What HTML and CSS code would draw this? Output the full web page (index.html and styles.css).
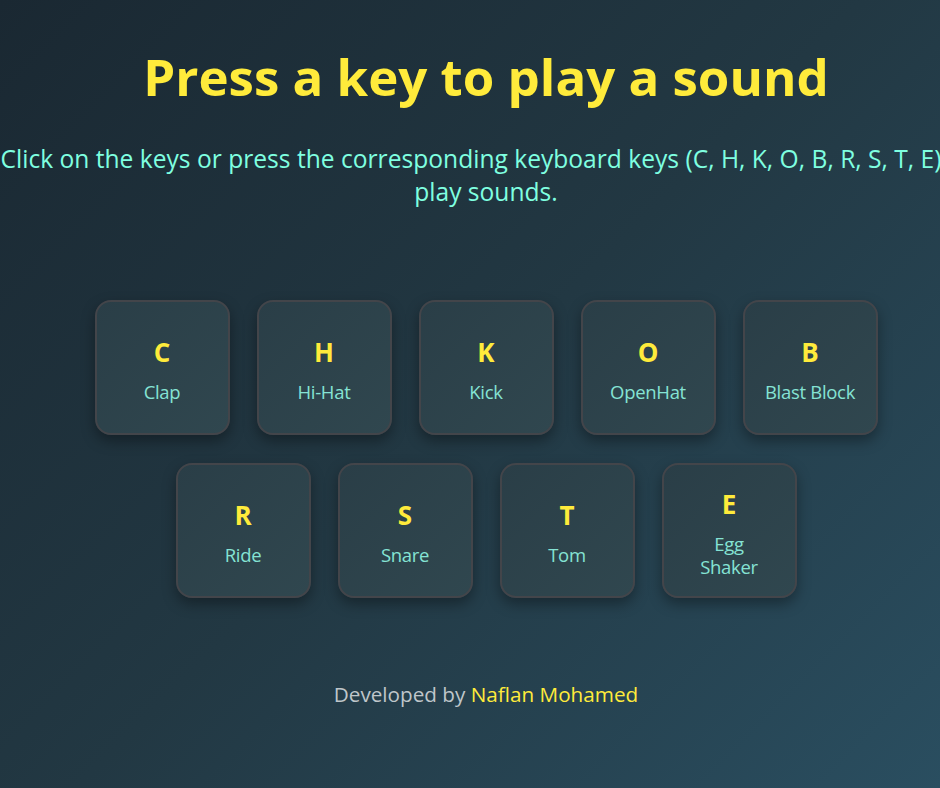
FILE: index.html
```html
<!DOCTYPE html>
<html lang="en">
<head>
<meta charset="utf-8">
<title>Drum Kit</title>
<link rel="stylesheet" href="styles.css">
</head>
<body>
<div class="page">
  <h1 class="title">Press a key to play a sound</h1>
  <p class="subtitle">Click on the keys or press the corresponding keyboard keys (C, H, K, O, B, R, S, T, E) to play sounds.</p>
  <div class="keys">
    <div class="key"><span class="letter">C</span><span class="label">Clap</span></div>
    <div class="key"><span class="letter">H</span><span class="label">Hi-Hat</span></div>
    <div class="key"><span class="letter">K</span><span class="label">Kick</span></div>
    <div class="key"><span class="letter">O</span><span class="label">OpenHat</span></div>
    <div class="key"><span class="letter">B</span><span class="label">Blast Block</span></div>
    <div class="key"><span class="letter">R</span><span class="label">Ride</span></div>
    <div class="key"><span class="letter">S</span><span class="label">Snare</span></div>
    <div class="key"><span class="letter">T</span><span class="label">Tom</span></div>
    <div class="key"><span class="letter">E</span><span class="label">Egg<br>Shaker</span></div>
  </div>
  <p class="footer">Developed by <span class="author">Naflan Mohamed</span></p>
</div>
</body>
</html>
```
FILE: styles.css
```css
html {
  overflow: hidden;
  height: 100%;
}
body {
  margin: 0;
  height: 100%;
  background: linear-gradient(135deg, #1a2832 0%, #223843 50%, #2a4e60 100%);
  font-family: "Open Sans", "Noto Sans", sans-serif;
}
.page {
  width: 972px;
  display: flex;
  flex-direction: column;
  align-items: center;
  text-align: center;
}
.title {
  margin: 44px 0 0;
  font-size: 51px;
  line-height: 64px;
  font-weight: 700;
  color: #ffeb3b;
}
.subtitle {
  margin: 34px 0 0;
  width: 990px;
  flex: none;
  font-size: 24.6px;
  line-height: 33px;
  color: #7fffe0;
}
.keys {
  margin-top: 92px;
  width: 783px;
  display: flex;
  flex-wrap: wrap;
  justify-content: center;
  gap: 28px 27px;
}
.key {
  box-sizing: border-box;
  width: 135px;
  height: 135px;
  border: 2px solid #43454a;
  border-radius: 16px;
  background: linear-gradient(135deg, #2a3e47, #30474f);
  box-shadow: 0 6px 14px rgba(0, 0, 0, 0.35);
  display: flex;
  flex-direction: column;
  align-items: center;
  justify-content: center;
  padding-top: 4px;
}
.letter {
  font-size: 26px;
  line-height: 32px;
  font-weight: 700;
  color: #ffeb3b;
  margin-bottom: 12px;
}
.label {
  font-size: 18.5px;
  line-height: 23px;
  color: #85e3d4;
  letter-spacing: -0.3px;
}
.footer {
  margin: 84px 0 0;
  font-size: 20.7px;
  line-height: 24px;
  color: #bfc6ca;
}
.author {
  color: #ffeb3b;
}
```
